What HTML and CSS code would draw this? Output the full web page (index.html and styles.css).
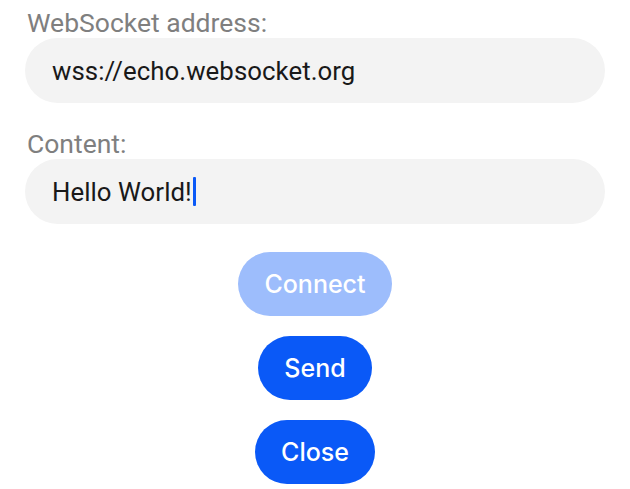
FILE: index.html
```html
<!DOCTYPE html>
<html>
<head>
<meta charset="utf-8">
<link rel="stylesheet" href="styles.css">
</head>
<body>
<main class="page">
  <label class="label">WebSocket address:</label>
  <div class="field">wss://echo.websocket.org</div>
  <label class="label label-second">Content:</label>
  <div class="field">Hello World!<span class="caret"></span></div>
  <div class="actions">
    <button class="btn btn-disabled">Connect</button>
    <button class="btn">Send</button>
    <button class="btn">Close</button>
  </div>
</main>
</body>
</html>
```

FILE: styles.css
```css
html, body {
  margin: 0;
  padding: 0;
  background: #ffffff;
}

.page {
  display: flex;
  flex-direction: column;
  padding: 8px 25px 0 25px;
  font-family: Roboto, "Noto Sans", sans-serif;
}

.label {
  font-size: 26.5px;
  line-height: 30px;
  color: #7f7f7f;
  padding-left: 2px;
}

.label-second {
  margin-top: 26px;
}

.field {
  display: flex;
  align-items: center;
  height: 65px;
  border-radius: 33px;
  background: #f3f3f3;
  padding-left: 27px;
  font-size: 25.8px;
  letter-spacing: 0.05px;
  color: #191919;
}

.caret {
  display: inline-block;
  width: 3px;
  height: 29px;
  background: #0a59f7;
  margin-left: 1px;
  border-radius: 1px;
}

.actions {
  display: flex;
  flex-direction: column;
  align-items: center;
  gap: 20px;
  margin-top: 28px;
}

.btn {
  height: 64px;
  border: none;
  border-radius: 32px;
  padding: 0 26px;
  background: #0a59f7;
  color: #ffffff;
  font-family: Inter, Roboto, sans-serif;
  font-size: 25px;
  font-weight: 500;
}

.btn-disabled {
  background: #9dbdfc;
}
```
